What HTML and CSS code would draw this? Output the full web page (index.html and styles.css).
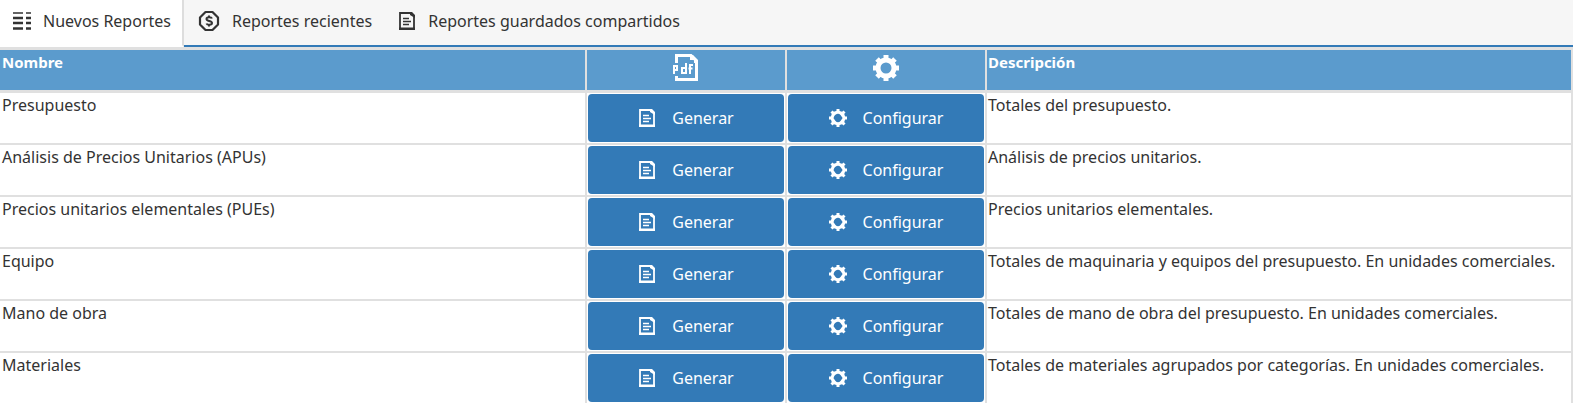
FILE: index.html
```
<!DOCTYPE html>
<html lang="es">
  <head>
    <meta charset="utf-8" />
    <title>Reportes</title>
    <link rel="stylesheet" href="styles.css">
  </head>
  <body>
    <!-- Shared icons -->
    <svg class="sprite" aria-hidden="true">
      <symbol id="icon-list" viewBox="0 0 18 18">
        <path d="M0 1h10M13 1h5" stroke="currentColor" stroke-width="1.500" />
        <path d="M0 6h10M0 11h10M0 16.500h10M13 6h5M13 11h5M13 16.500h5" stroke="currentColor" stroke-width="2.600" />
      </symbol>
      <symbol id="icon-recent" viewBox="0 0 22 22">
        <path d="M7.500 2h7L20 7.500v7L14.500 20h-7L2 14.500v-7z" fill="none" stroke="currentColor" stroke-width="2.200" stroke-linejoin="round" />
        <path d="M14 8.500C13.500 7 8.500 6.500 8.500 9c0 2.500 5.500 1.500 5.500 4 0 2.500-5 2-5.500.5M11 5.500v1.500M11 15v1.500" fill="none" stroke="currentColor" stroke-width="2" />
      </symbol>
      <symbol id="icon-file" viewBox="0 0 18 18">
        <path d="M2 1h11l3 3v13H2z" fill="none" stroke="currentColor" stroke-width="1.800" />
        <path d="M5 6.500h6M5 9.500h8M5 12.500h6" stroke="currentColor" stroke-width="1.500" />
        <path d="M12 0h2l3 3v3l-5-3zM1 15.500h16V18H1z" fill="currentColor" />
      </symbol>
      <symbol id="icon-gear" viewBox="0 0 26 26">
        <circle cx="13" cy="13" r="8" fill="none" stroke="currentColor" stroke-width="5" />
        <path d="M13 0v4M13 22v4M0 13h4M22 13h4M4 4l3 3M19 19l3 3M22 4l-3 3M7 19l-3 3" stroke="currentColor" stroke-width="5" />
      </symbol>
      <symbol id="icon-gear-small" viewBox="0 0 18 18">
        <path d="M9 3L4.500 4.500 3 9l1.500 4.500L9 15l4.500-1.500L15 9l-1.500-4.500z" fill="none" stroke="currentColor" stroke-width="3" />
        <path d="M9 0v3M9 15v3M0 9h3M15 9h3M2.500 2.500l2 2M13.500 13.500l2 2M15.500 2.500l-2 2M4.500 13.500l-2 2" stroke="currentColor" stroke-width="3" />
        <path d="M5 4h3L4 8zM13 4v4l-3-4zM5 14v-4l3 4zM13 14h-3l3-4z" fill="currentColor" />
      </symbol>
    </svg>

    <nav class="tabs">
      <a class="tab active" href="#nuevos">
        <svg class="icon"><use href="#icon-list" /></svg>
        Nuevos Reportes
      </a>
      <a class="tab" href="#recientes">
        <svg class="icon icon-round"><use href="#icon-recent" /></svg>
        Reportes recientes
      </a>
      <a class="tab" href="#compartidos">
        <svg class="icon"><use href="#icon-file" /></svg>
        Reportes guardados compartidos
      </a>
    </nav>

    <table class="reports" id="nuevos">
      <colgroup>
        <col class="col-name" />
        <col class="col-action" />
        <col class="col-action" />
        <col class="col-desc" />
      </colgroup>
      <thead>
        <tr>
          <th>Nombre</th>
          <th class="center">
            <svg class="head-icon" viewBox="0 0 26 28" role="img" aria-label="PDF">
              <path d="M3.500 9V1.500H18L23.500 7v18.500h-20V22" fill="none" stroke="currentColor" stroke-width="3" />
              <path d="M17 1h3l5 5v3h-4V6h-4z" fill="currentColor" />
              <path d="M1 20v-8h3v4H1M13 9v10H9v-5h4M17 20v-9h3M15.500 14.500h4" fill="none" stroke="currentColor" stroke-width="2" />
            </svg>
          </th>
          <th class="center">
            <svg class="head-icon" role="img" aria-label="Configurar"><use href="#icon-gear" /></svg>
          </th>
          <th>Descripción</th>
        </tr>
      </thead>
      <tbody>
        <tr>
          <td>Presupuesto</td>
          <td><button type="button" class="btn"><svg class="icon"><use href="#icon-file" /></svg>Generar</button></td>
          <td><button type="button" class="btn"><svg class="icon"><use href="#icon-gear-small" /></svg>Configurar</button></td>
          <td>Totales del presupuesto.</td>
        </tr>
        <tr>
          <td>Análisis de Precios Unitarios (APUs)</td>
          <td><button type="button" class="btn"><svg class="icon"><use href="#icon-file" /></svg>Generar</button></td>
          <td><button type="button" class="btn"><svg class="icon"><use href="#icon-gear-small" /></svg>Configurar</button></td>
          <td>Análisis de precios unitarios.</td>
        </tr>
        <tr>
          <td>Precios unitarios elementales (PUEs)</td>
          <td><button type="button" class="btn"><svg class="icon"><use href="#icon-file" /></svg>Generar</button></td>
          <td><button type="button" class="btn"><svg class="icon"><use href="#icon-gear-small" /></svg>Configurar</button></td>
          <td>Precios unitarios elementales.</td>
        </tr>
        <tr>
          <td>Equipo</td>
          <td><button type="button" class="btn"><svg class="icon"><use href="#icon-file" /></svg>Generar</button></td>
          <td><button type="button" class="btn"><svg class="icon"><use href="#icon-gear-small" /></svg>Configurar</button></td>
          <td>Totales de maquinaria y equipos del presupuesto. En unidades comerciales.</td>
        </tr>
        <tr>
          <td>Mano de obra</td>
          <td><button type="button" class="btn"><svg class="icon"><use href="#icon-file" /></svg>Generar</button></td>
          <td><button type="button" class="btn"><svg class="icon"><use href="#icon-gear-small" /></svg>Configurar</button></td>
          <td>Totales de mano de obra del presupuesto. En unidades comerciales.</td>
        </tr>
        <tr>
          <td>Materiales</td>
          <td><button type="button" class="btn"><svg class="icon"><use href="#icon-file" /></svg>Generar</button></td>
          <td><button type="button" class="btn"><svg class="icon"><use href="#icon-gear-small" /></svg>Configurar</button></td>
          <td>Totales de materiales agrupados por categorías. En unidades comerciales.</td>
        </tr>
      </tbody>
    </table>
  </body>
</html>
```
FILE: styles.css
```
body {
  margin: 0;
  padding-right: 8px;
  background: white;
  color: #333;
  font-family: "Noto Sans", sans-serif;
  font-size: 16px;
  line-height: 22px;
}

.sprite {
  display: none;
}

/* Tabs */
.tabs {
  display: flex;
  background: #f6f6f6;
}

.tabs::after {
  content: "";
  flex: 1;
  border-bottom: 2px solid #337ab7;
}

.tab {
  display: flex;
  align-items: center;
  gap: 12px;
  height: 47px;
  padding: 0 12px 4px 14px;
  box-sizing: border-box;
  color: #333;
  text-decoration: none;
  border-bottom: 2px solid #337ab7;
}

.tab.active {
  padding-left: 13px;
  padding-right: 11px;
  background: white;
  border-right: 2px solid #ddd;
  border-bottom-color: white;
}

.icon {
  width: 18px;
  height: 18px;
  flex: none;
}

.icon-round {
  width: 22px;
  height: 22px;
}

/* Reports table */
.reports {
  width: 100%;
  padding-left: 1px;
  table-layout: fixed;
  border-collapse: collapse;
}

.col-action {
  width: 200px;
}

.reports th,
.reports td {
  padding: 1px;
  border: 2px solid #e0e0e0;
  text-align: left;
  vertical-align: top;
}

.reports th {
  height: 38px;
  border-top-width: 3px;
  border-bottom-width: 3px;
  background: #5b9bcd;
  color: white;
  font-size: 15px;
}

.reports th.center {
  text-align: center;
}

.reports th:first-child,
.reports td:first-child {
  padding-left: 2px;
  border-left: 0;
}

.reports tr:last-child td {
  border-bottom: 0;
}

.head-icon {
  width: 26px;
  height: 28px;
  margin-top: 3px;
}

.btn {
  display: flex;
  align-items: center;
  justify-content: center;
  gap: 16px;
  width: 100%;
  height: 48px;
  padding: 0;
  border: 0;
  border-radius: 4px;
  background: #337ab7;
  color: white;
  font: inherit;
}
```
